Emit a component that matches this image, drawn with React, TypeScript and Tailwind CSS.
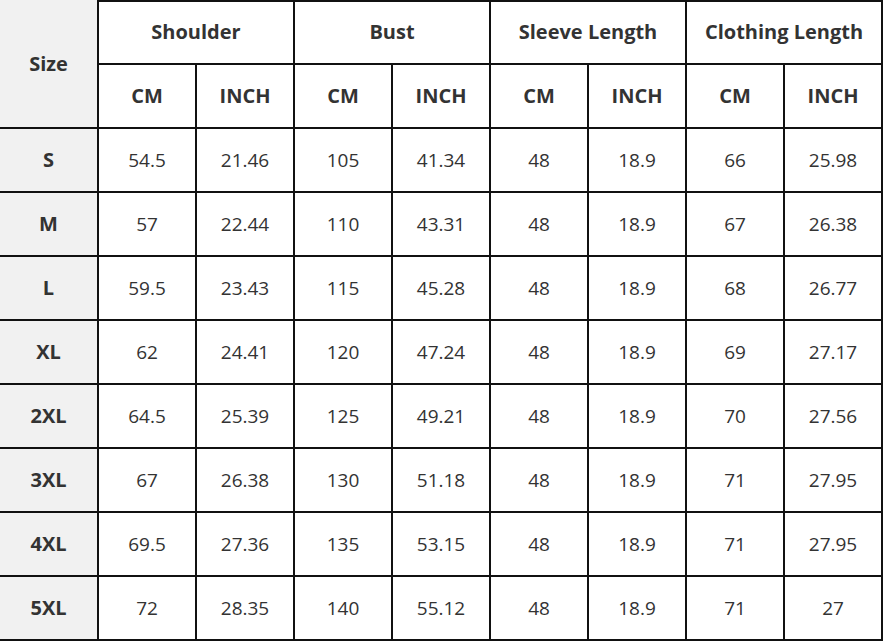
import React from "react";

const rows: [string, string[]][] = [
  ["S", ["54.5", "21.46", "105", "41.34", "48", "18.9", "66", "25.98"]],
  ["M", ["57", "22.44", "110", "43.31", "48", "18.9", "67", "26.38"]],
  ["L", ["59.5", "23.43", "115", "45.28", "48", "18.9", "68", "26.77"]],
  ["XL", ["62", "24.41", "120", "47.24", "48", "18.9", "69", "27.17"]],
  ["2XL", ["64.5", "25.39", "125", "49.21", "48", "18.9", "70", "27.56"]],
  ["3XL", ["67", "26.38", "130", "51.18", "48", "18.9", "71", "27.95"]],
  ["4XL", ["69.5", "27.36", "135", "53.15", "48", "18.9", "71", "27.95"]],
  ["5XL", ["72", "28.35", "140", "55.12", "48", "18.9", "71", "27"]],
];

const groups = ["Shoulder", "Bust", "Sleeve Length", "Clothing Length"];

export default function App() {
  const cell = "flex items-center justify-center border-r-2 border-b-2 border-[#111]";
  return (
    <div
      className="w-[883px] h-[641px] bg-white text-[#333]"
      style={{ fontFamily: '"Open Sans", "Noto Sans", sans-serif' }}
    >
      <div className="grid grid-cols-[99px_repeat(8,98px)] grid-rows-[65px_repeat(9,64px)]">
        <div className={`${cell} row-span-2 bg-[#f1f1f1] font-bold text-[20px]`}>Size</div>
        {groups.map((g) => (
          <div key={g} className={`${cell} col-span-2 border-t-2 font-bold text-[20px] pb-[1px]`}>
            {g}
          </div>
        ))}
        {groups.map((g) => (
          <React.Fragment key={g + "u"}>
            <div className={`${cell} font-bold text-[20px]`}>CM</div>
            <div className={`${cell} font-bold text-[20px]`}>INCH</div>
          </React.Fragment>
        ))}
        {rows.map(([size, vals]) => (
          <React.Fragment key={size}>
            <div className={`${cell} bg-[#f1f1f1] font-bold text-[20px]`}>{size}</div>
            {vals.map((v, i) => (
              <div key={i} className={`${cell} text-[19px]`}>
                {v}
              </div>
            ))}
          </React.Fragment>
        ))}
      </div>
    </div>
  );
}
